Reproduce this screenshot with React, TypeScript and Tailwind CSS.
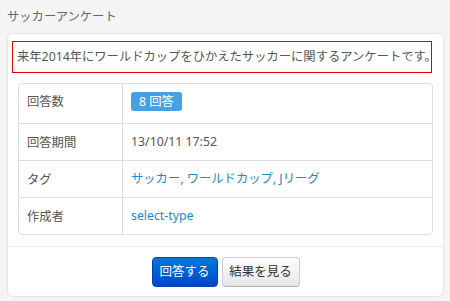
import React from 'react';

const rows = [
  { label: '回答数', kind: 'badge' },
  { label: '回答期間', kind: 'text', value: '13/10/11 17:52' },
  { label: 'タグ', kind: 'tags' },
  { label: '作成者', kind: 'link', value: 'select-type' },
];

export default function App() {
  return (
    <div
      className="w-[450px] h-[301px] bg-[#f4f4f4] pt-[8px] text-[12.3px] text-[#555] overflow-hidden"
      style={{ fontFamily: '"Noto Sans", "Noto Sans CJK JP", sans-serif' }}
    >
      {/* Title */}
      <h2 className="ml-[7px] h-[18px] leading-[18px] text-[12.3px] font-normal text-[#666] mb-[7px]">
        サッカーアンケート
      </h2>

      {/* Card */}
      <div className="ml-[7px] w-[437px] bg-white border border-[#e6e6e6] rounded-[6px] pt-[7px]">
        {/* Description */}
        <div className="ml-[4px] mr-[11px] h-[32px] border border-[#e00000] flex items-center pl-[4px] text-[#555] whitespace-nowrap">
          来年2014年にワールドカップをひかえたサッカーに関するアンケートです。
        </div>

        {/* Info table */}
        <div className="mx-[10px] mt-[10px] border border-[#dddddd] rounded-[4px] overflow-hidden">
          {rows.map((row, i) => (
            <div
              key={row.label}
              className={`flex ${i > 0 ? 'border-t border-[#dddddd] h-[37px]' : 'h-[39px]'}`}
            >
              <div
                className={`w-[104px] shrink-0 border-r border-[#dddddd] pl-[8px] flex ${
                  row.kind === 'badge' ? 'items-start pt-[8px]' : 'items-center'
                }`}
              >
                <span className="leading-[19px]">{row.label}</span>
              </div>
              <div
                className={`flex-1 pl-[8px] flex ${
                  row.kind === 'badge' ? 'items-start pt-[8px]' : 'items-center'
                }`}
              >
                {row.kind === 'badge' && (
                  <span className="inline-flex items-center h-[19px] px-[8px] rounded-[3px] bg-[#47a0e6] text-white leading-[19px]">
                    8 回答
                  </span>
                )}
                {row.kind === 'text' && <span>{row.value}</span>}
                {row.kind === 'tags' && (
                  <span className="text-[#1a8acb]">
                    <a className="text-[#1a8acb]">サッカー</a>,{' '}
                    <a className="text-[#1a8acb]">ワールドカップ</a>,{' '}
                    <a className="text-[#1a8acb]">Jリーグ</a>
                  </span>
                )}
                {row.kind === 'link' && <a className="text-[#1a8acb]">{row.value}</a>}
              </div>
            </div>
          ))}
        </div>

        {/* Actions */}
        <div className="mt-[11px] border-t border-[#ececec] pt-[10px] pb-[9px] flex justify-center gap-[4px]">
          <button className="w-[66px] h-[30px] rounded-[4px] border border-[#0044aa] bg-linear-to-b from-[#0a78d6] to-[#0044cc] text-white text-[12.5px] leading-none">
            回答する
          </button>
          <button className="w-[78px] h-[30px] rounded-[4px] border border-[#cccccc] border-b-[#b3b3b3] bg-linear-to-b from-white to-[#e6e6e6] text-[#333] text-[12.5px] leading-none">
            結果を見る
          </button>
        </div>
      </div>
    </div>
  );
}
